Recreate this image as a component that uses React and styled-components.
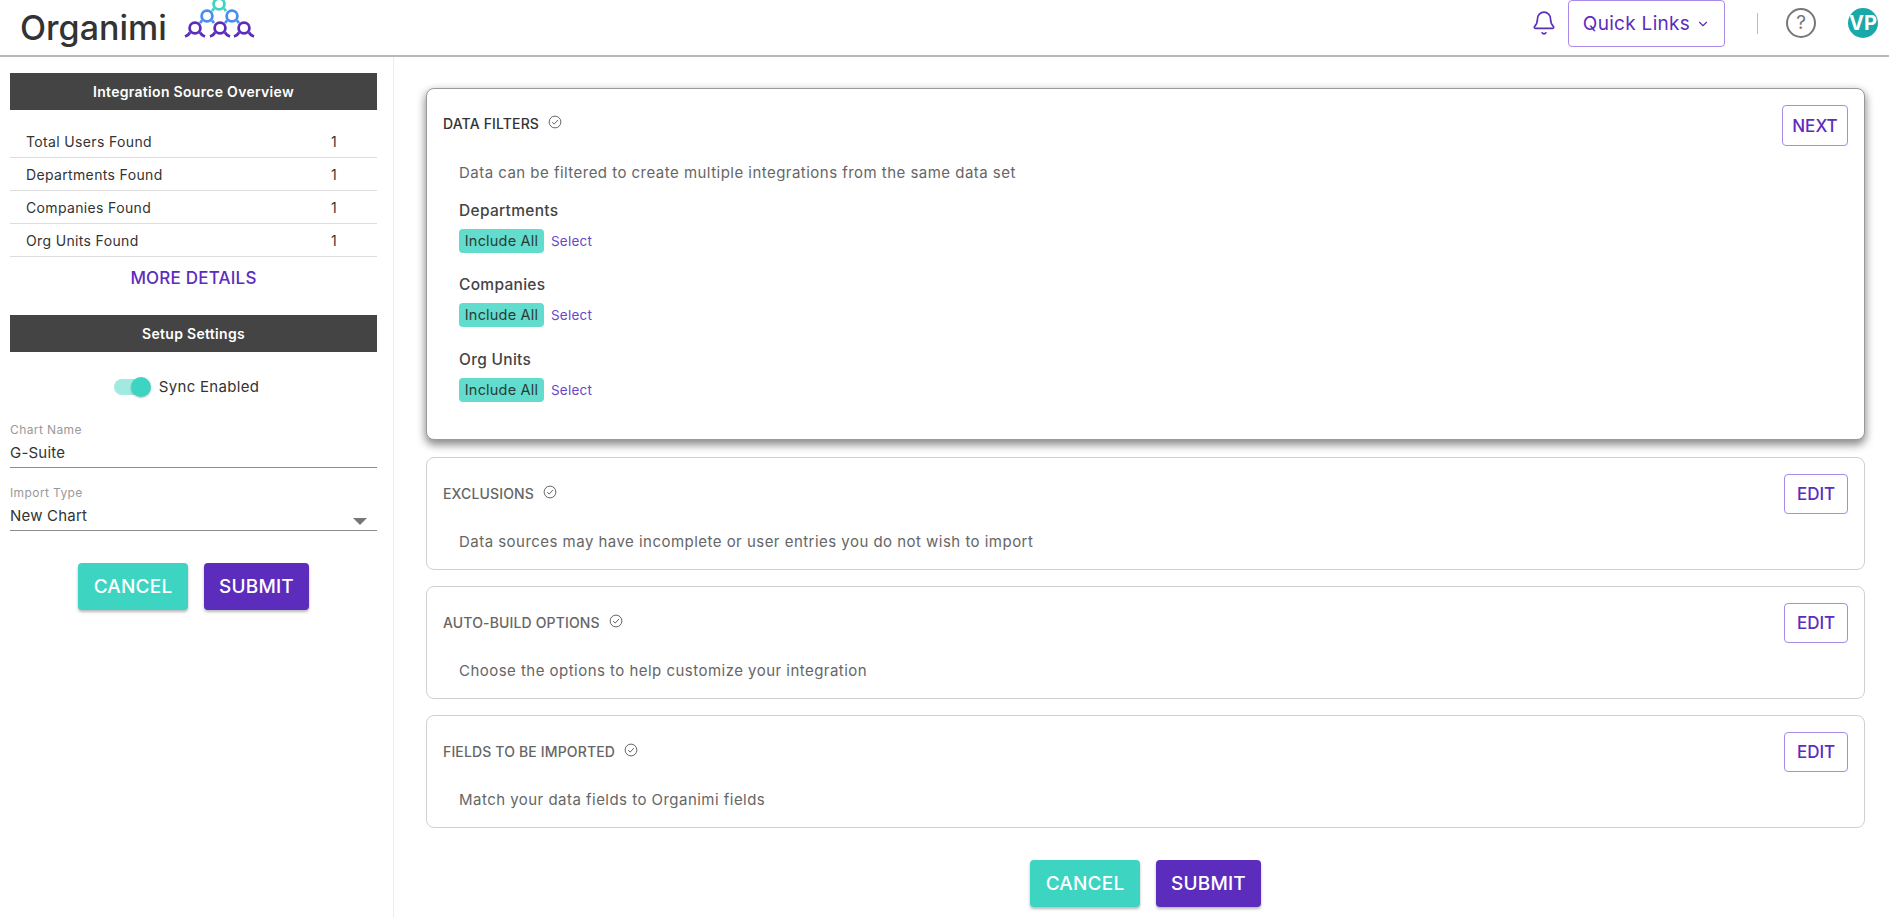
import React from 'react';
import styled, { createGlobalStyle } from 'styled-components';
import { Bell, ChevronDown } from 'lucide-react';

const purple = '#5c2dbd';
const teal = '#3dd4c2';

const GlobalStyle = createGlobalStyle`
  html, body {
    margin: 0;
    padding: 0;
    background: #fff;
    font-family: Inter, 'Open Sans', sans-serif;
    overflow: hidden;
  }
  * { box-sizing: border-box; }
`;

const Page = styled.div`
  width: 1889px;
  height: 918px;
  display: flex;
  flex-direction: column;
`;

const Header = styled.header`
  height: 57px;
  flex: none;
  display: flex;
  align-items: flex-start;
  justify-content: space-between;
  border-bottom: 2px solid #b8b8b8;
  padding-left: 20px;
`;

const Brand = styled.div`
  display: flex;
  align-items: flex-start;
  gap: 16px;
`;

const BrandName = styled.span`
  font-size: 34px;
  line-height: 55px;
  font-weight: 500;
  color: #333;
`;

const HeaderRight = styled.div`
  display: flex;
  align-items: flex-start;
`;

const BellWrap = styled.span`
  display: flex;
  margin: 10px 11px 0 0;
  color: ${purple};
`;

const QuickLinks = styled.button`
  width: 157px;
  height: 47px;
  border: 1px solid #a78be6;
  border-radius: 4px;
  background: #fff;
  color: ${purple};
  font-family: inherit;
  font-size: 19px;
  letter-spacing: 0.3px;
  display: flex;
  align-items: center;
  justify-content: center;
  gap: 6px;
  padding: 0;
`;

const Rule = styled.span`
  width: 1px;
  height: 21px;
  margin: 13px 28px 0 32px;
  background: #bbb;
`;

const HelpIcon = styled.span`
  width: 30px;
  height: 30px;
  margin-top: 8px;
  border: 2px solid #777;
  border-radius: 50%;
  color: #777;
  font-size: 19px;
  line-height: 26px;
  text-align: center;
`;

const Avatar = styled.span`
  width: 30px;
  height: 30px;
  margin: 8px 11px 0 32px;
  border-radius: 50%;
  background: #1aa9a9;
  color: #fff;
  font-size: 20px;
  font-weight: 700;
  line-height: 30px;
  text-align: center;
  overflow: hidden;
  white-space: nowrap;
`;

const Body = styled.div`
  flex: 1;
  display: flex;
  min-height: 0;
`;

const Sidebar = styled.aside`
  width: 394px;
  flex: none;
  border-right: 1px solid #ececec;
  padding: 16px 16px 0 10px;
`;

const SectionBar = styled.div`
  height: 37px;
  background: #444;
  color: #fff;
  font-size: 14px;
  font-weight: 600;
  letter-spacing: 0.3px;
  line-height: 37px;
  text-align: center;
`;

const StatList = styled.div`
  margin-top: 15px;
`;

const StatRow = styled.div`
  height: 33px;
  display: grid;
  grid-template-columns: 305px 1fr;
  align-items: center;
  padding: 0 0 0 16px;
  border-bottom: 1px solid #ddd;
  font-size: 14px;
  letter-spacing: 0.35px;
  color: #333;
`;

const MoreDetails = styled.div`
  margin: 6px 0 0;
  height: 30px;
  line-height: 30px;
  text-align: center;
  font-size: 17px;
  font-weight: 500;
  letter-spacing: 0.2px;
  color: ${purple};
`;

const SetupBar = styled(SectionBar)`
  margin-top: 22px;
`;

const ToggleRow = styled.div`
  display: flex;
  align-items: center;
  justify-content: center;
  gap: 9px;
  margin-top: 25px;
  padding-right: 14px;
  font-size: 15px;
  letter-spacing: 0.3px;
  color: #333;
`;

const ToggleTrack = styled.span`
  position: relative;
  display: block;
  width: 36px;
  height: 16px;
  border-radius: 8px;
  background: #a0eadf;
`;

const ToggleKnob = styled.span`
  position: absolute;
  right: -1px;
  top: -2px;
  width: 20px;
  height: 20px;
  border-radius: 50%;
  background: ${teal};
  box-shadow: 0 1px 2px rgba(0, 0, 0, 0.25);
`;

const Field = styled.div`
  position: relative;
  margin-top: ${(p) => p.$top}px;
  border-bottom: 1px solid #8c8c8c;
`;

const FieldLabel = styled.div`
  font-size: 12px;
  letter-spacing: 0.4px;
  line-height: 16px;
  color: #999;
`;

const FieldValue = styled.div`
  font-size: 15px;
  letter-spacing: 0.2px;
  line-height: 24px;
  padding: 3px 0 2px;
  color: #333;
`;

const Caret = styled.span`
  position: absolute;
  right: 10px;
  bottom: 5px;
  width: 0;
  height: 0;
  border-left: 7px solid transparent;
  border-right: 7px solid transparent;
  border-top: 7px solid #777;
`;

const ActionRow = styled.div`
  display: flex;
  justify-content: center;
  gap: 16px;
  margin-top: ${(p) => p.$top}px;
`;

const ActionButton = styled.button`
  height: 47px;
  width: ${(p) => p.$width}px;
  border: none;
  border-radius: 4px;
  background: ${(p) => p.$bg};
  color: #fff;
  font-family: inherit;
  font-size: 19px;
  font-weight: 500;
  letter-spacing: 0.2px;
  padding: 0;
  box-shadow: 0 2px 3px rgba(0, 0, 0, 0.28);
`;

const Main = styled.main`
  flex: 1;
  padding: 31px 24px 0 32px;
`;

const Card = styled.section`
  position: relative;
  margin-bottom: ${(p) => (p.$active ? 17 : 16)}px;
  height: ${(p) => (p.$active ? 352 : 113)}px;
  border-radius: 8px;
  padding: 16px;
  background: #fff;
  border: 1px solid ${(p) => (p.$active ? '#9a9a9a' : '#d0d0d0')};
  box-shadow: ${(p) => (p.$active ? '0 4px 8px 1px rgba(0, 0, 0, 0.45)' : 'none')};
`;

const CardHead = styled.div`
  display: flex;
  align-items: flex-start;
  justify-content: space-between;
`;

const CardTitle = styled.div`
  display: flex;
  align-items: flex-start;
  gap: 9px;
  padding-top: ${(p) => (p.$active ? 0 : 1)}px;
  font-size: 14px;
  font-weight: 500;
  letter-spacing: 0.15px;
  line-height: 38px;
  color: ${(p) => (p.$active ? '#333' : '#666')};

  svg {
    margin-top: 10px;
  }
`;

const OutlineButton = styled.button`
  width: ${(p) => p.$width}px;
  height: ${(p) => p.$height}px;
  border: 1px solid #a78be6;
  border-radius: 4px;
  background: #fff;
  color: ${purple};
  font-family: inherit;
  font-size: 17px;
  font-weight: 500;
  padding: 0;
`;

const CardText = styled.p`
  margin: ${(p) => p.$top}px 0 0 16px;
  font-size: 15px;
  letter-spacing: 0.47px;
  line-height: 22px;
  color: #666;
`;

const FilterGroup = styled.div`
  margin: ${(p) => p.$top}px 0 0 16px;
`;

const FilterName = styled.div`
  font-size: 15.5px;
  font-weight: 500;
  letter-spacing: 0.3px;
  line-height: 22px;
  color: #444;
`;

const FilterChoices = styled.div`
  display: flex;
  align-items: center;
  gap: 7px;
  margin-top: 7px;
`;

const IncludeChip = styled.span`
  width: 85px;
  height: 24px;
  border-radius: 4px;
  background: #62dccc;
  color: #2c3a38;
  font-size: 14.5px;
  letter-spacing: 0.2px;
  line-height: 24px;
  text-align: center;
  white-space: nowrap;
`;

const SelectLink = styled.span`
  font-size: 13.5px;
  letter-spacing: 0.2px;
  color: #6a45c8;
`;

const CheckMark = () => (
  <svg width="14" height="14" viewBox="0 0 14 14" fill="none" stroke="#555" strokeWidth="0.9">
    <circle cx="7" cy="7" r="5.9" />
    <path d="M4.2 7.2 6.2 9.1 9.9 5" />
  </svg>
);

// bottom row of the logo has full shoulders, upper rows only short links to the row below
const LogoPerson = ({ x, y, color, flare }) => (
  <g stroke={color} fill="none" strokeWidth="2.8">
    <circle cx={x} cy={y} r="5.4" />
    {flare ? (
      <path d={`M${x - 10} ${y + 8.5} c3 -1 4 -2 5 -4 M${x + 10} ${y + 8.5} c-3 -1 -4 -2 -5 -4`} />
    ) : (
      <path d={`M${x - 7} ${y + 7} l2 -2.5 M${x + 7} ${y + 7} l-2 -2.5`} />
    )}
  </g>
);

const Logo = () => (
  <svg width="74" height="38" viewBox="0 0 74 38">
    <LogoPerson x={36} y={4} color={teal} />
    <LogoPerson x={24} y={16} color="#4a8cf0" />
    <LogoPerson x={49} y={16} color="#4a8cf0" />
    <LogoPerson x={12} y={28} color={purple} flare />
    <LogoPerson x={37} y={28} color={purple} flare />
    <LogoPerson x={61} y={28} color={purple} flare />
  </svg>
);

const stats = ['Total Users Found', 'Departments Found', 'Companies Found', 'Org Units Found'];

const filters = [
  { name: 'Departments', top: 16 },
  { name: 'Companies', top: 21 },
  { name: 'Org Units', top: 22 },
];

const collapsed = [
  { title: 'EXCLUSIONS', text: 'Data sources may have incomplete or user entries you do not wish to import' },
  { title: 'AUTO-BUILD OPTIONS', text: 'Choose the options to help customize your integration' },
  { title: 'FIELDS TO BE IMPORTED', text: 'Match your data fields to Organimi fields' },
];

const Actions = ({ top }) => (
  <ActionRow $top={top}>
    <ActionButton $bg={teal} $width={110}>CANCEL</ActionButton>
    <ActionButton $bg={purple} $width={105}>SUBMIT</ActionButton>
  </ActionRow>
);

export default function App() {
  return (
    <Page>
      <GlobalStyle />
      <Header>
        <Brand>
          <BrandName>Organimi</BrandName>
          <Logo />
        </Brand>
        <HeaderRight>
          <BellWrap><Bell size={26} strokeWidth={1.5} /></BellWrap>
          <QuickLinks>Quick Links <ChevronDown size={14} /></QuickLinks>
          <Rule />
          <HelpIcon>?</HelpIcon>
          <Avatar>VP</Avatar>
        </HeaderRight>
      </Header>
      <Body>
        <Sidebar>
          <SectionBar>Integration Source Overview</SectionBar>
          <StatList>
            {stats.map((label) => (
              <StatRow key={label}>
                <span>{label}</span>
                <span>1</span>
              </StatRow>
            ))}
          </StatList>
          <MoreDetails>MORE DETAILS</MoreDetails>
          <SetupBar>Setup Settings</SetupBar>
          <ToggleRow>
            <ToggleTrack><ToggleKnob /></ToggleTrack>
            Sync Enabled
          </ToggleRow>
          <Field $top={26}>
            <FieldLabel>Chart Name</FieldLabel>
            <FieldValue>G-Suite</FieldValue>
          </Field>
          <Field $top={17}>
            <FieldLabel>Import Type</FieldLabel>
            <FieldValue>New Chart</FieldValue>
            <Caret />
          </Field>
          <Actions top={32} />
        </Sidebar>
        <Main>
          <Card $active>
            <CardHead>
              <CardTitle $active>DATA FILTERS <CheckMark /></CardTitle>
              <OutlineButton $width={66} $height={41}>NEXT</OutlineButton>
            </CardHead>
            <CardText $top={16}>Data can be filtered to create multiple integrations from the same data set</CardText>
            {filters.map((f) => (
              <FilterGroup key={f.name} $top={f.top}>
                <FilterName>{f.name}</FilterName>
                <FilterChoices>
                  <IncludeChip>Include All</IncludeChip>
                  <SelectLink>Select</SelectLink>
                </FilterChoices>
              </FilterGroup>
            ))}
          </Card>
          {collapsed.map((c) => (
            <Card key={c.title}>
              <CardHead>
                <CardTitle>{c.title} <CheckMark /></CardTitle>
                <OutlineButton $width={64} $height={40}>EDIT</OutlineButton>
              </CardHead>
              <CardText $top={17}>{c.text}</CardText>
            </Card>
          ))}
          <Actions top={32} />
        </Main>
      </Body>
    </Page>
  );
}
